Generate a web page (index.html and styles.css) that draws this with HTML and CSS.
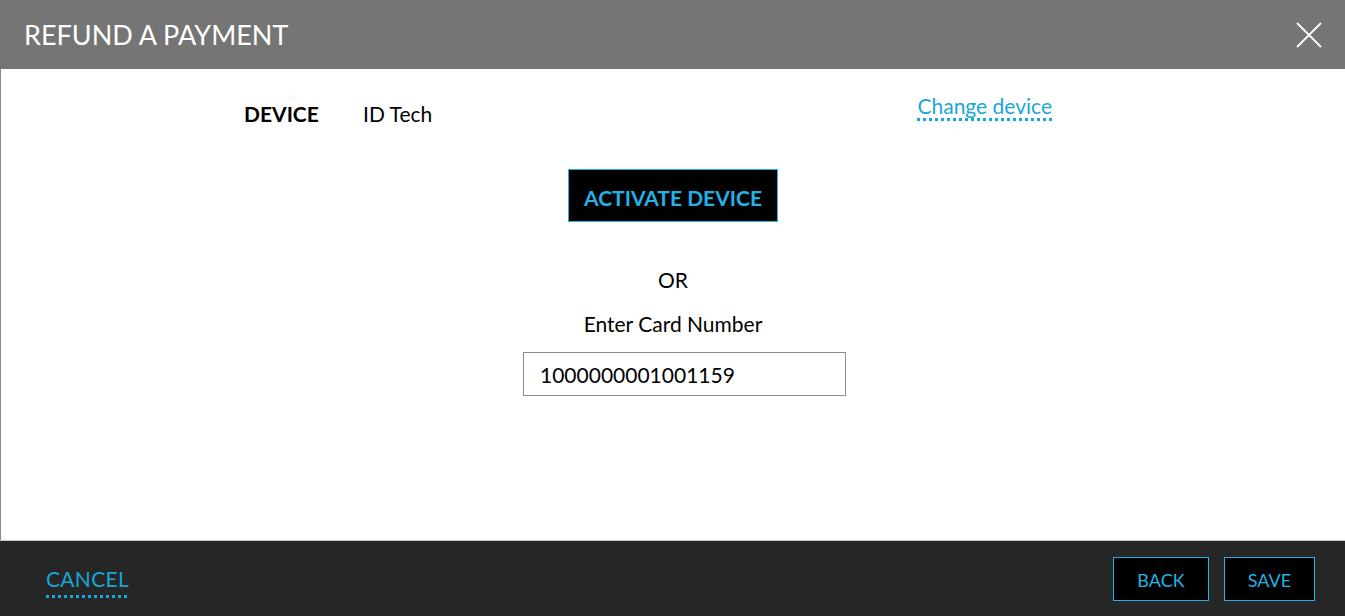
FILE: index.html
```html
<!DOCTYPE html>
<html>
<head>
<meta charset="utf-8">
<link rel="stylesheet" href="styles.css">
</head>
<body>
<div class="dialog">
  <header class="dialog-header">
    <h1 class="dialog-title">REFUND A PAYMENT</h1>
    <button class="close-btn" aria-label="Close">
      <svg width="26" height="26" viewBox="0 0 26 26"><path d="M1 1 L25 25 M25 1 L1 25" stroke="#fff" stroke-width="1.8" fill="none"/></svg>
    </button>
  </header>
  <main class="dialog-body">
    <div class="device-row">
      <div class="device-info">
        <span class="device-label">DEVICE</span>
        <span class="device-value">ID Tech</span>
      </div>
      <a class="dotted-link change-link" href="#">Change device</a>
    </div>
    <div class="center-col">
      <button class="activate-btn">ACTIVATE DEVICE</button>
      <div class="or-text">OR</div>
      <div class="enter-text">Enter Card Number</div>
      <div class="input-wrap">
        <input class="card-input" type="text" value="1000000001001159">
      </div>
    </div>
  </main>
  <footer class="dialog-footer">
    <a class="dotted-link cancel-link" href="#">CANCEL</a>
    <div class="footer-actions">
      <button class="outline-btn back-btn">BACK</button>
      <button class="outline-btn save-btn">SAVE</button>
    </div>
  </footer>
</div>
</body>
</html>
```

FILE: styles.css
```css
* { box-sizing: border-box; }
html, body { margin: 0; padding: 0; }
body {
  font-family: Lato, "Open Sans", sans-serif;
  background: #fff;
  color: #000;
}
.dialog {
  width: 1345px;
  height: 616px;
  display: flex;
  flex-direction: column;
}
.dialog-header {
  height: 69px;
  background: #757575;
  display: flex;
  align-items: center;
  justify-content: space-between;
  padding: 0 23px 0 24px;
  flex: none;
}
.dialog-title {
  margin: 0;
  font-size: 27px;
  font-weight: 400;
  color: #fff;
  line-height: 30px;
}
.close-btn {
  background: none;
  border: 0;
  padding: 0;
  width: 26px;
  height: 26px;
  display: flex;
  cursor: pointer;
}
.dialog-body {
  flex: 1;
  border-left: 1px solid #8a8a8a;
  padding-top: 25px;
  display: flex;
  flex-direction: column;
}
.device-row {
  display: flex;
  justify-content: space-between;
  align-items: flex-start;
  padding: 0 293px 0 243px;
  font-size: 21px;
  line-height: 24px;
}
.device-info {
  display: flex;
  margin-top: 8px;
}
.device-label {
  font-weight: 700;
  width: 119px;
}
.device-value {
  font-weight: 400;
}
.dotted-link {
  color: #1aa6d6;
  text-decoration: none;
  background-image: repeating-linear-gradient(90deg, #12a9dc 0 3px, transparent 3px 6px);
  background-size: 100% 3px;
  background-repeat: no-repeat;
  background-position: left bottom;
}
.change-link {
  padding-bottom: 3px;
  line-height: 24px;
}
.center-col {
  display: flex;
  flex-direction: column;
  align-items: center;
  font-size: 21px;
  line-height: 24px;
}
.activate-btn {
  margin-top: 43px;
  height: 53px;
  width: 210px;
  background: #000;
  border: 1px solid #22b6e6;
  color: #22b2e6;
  font-family: Lato, sans-serif;
  font-weight: 700;
  font-size: 21px;
  padding: 4px 0 0;
  cursor: pointer;
}
.or-text {
  margin-top: 46px;
}
.enter-text {
  margin-top: 20px;
}
.input-wrap {
  margin-top: 16px;
  padding-left: 23px;
}
.card-input {
  width: 323px;
  height: 44px;
  border: 1px solid #8c8c8c;
  font-family: Lato, sans-serif;
  font-size: 21px;
  padding: 0 0 0 16px;
  color: #000;
  outline: none;
  border-radius: 0;
}
.dialog-footer {
  height: 76px;
  flex: none;
  background: #262626;
  border-top: 1px solid #c8c8c8;
  display: flex;
  align-items: center;
  justify-content: space-between;
  padding: 0 30px 0 46px;
}
.cancel-link {
  font-size: 21px;
  line-height: 24px;
  letter-spacing: 0.3px;
  padding-bottom: 7px;
  margin-top: 8px;
  color: #17a6d8;
}
.footer-actions {
  display: flex;
  gap: 15px;
}
.outline-btn {
  height: 44px;
  background: #000;
  border: 1px solid #1fb4e6;
  color: #22b2e6;
  font-family: Lato, sans-serif;
  font-size: 18px;
  padding: 2px 0 0;
  cursor: pointer;
}
.back-btn { width: 96px; }
.save-btn { width: 91px; }
```
